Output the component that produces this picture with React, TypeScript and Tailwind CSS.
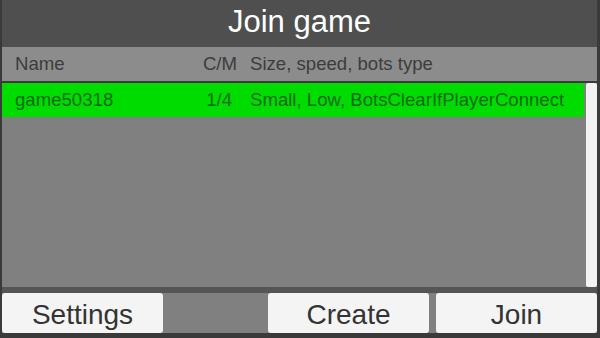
export default function App() {
  return (
    <div
      className="flex h-[338px] w-[600px] flex-col overflow-hidden bg-[#3a3a3a] pl-[2px] pr-[3px] pb-[5px]"
      style={{ fontFamily: '"Liberation Sans", Arial, sans-serif' }}
    >
      <div className="flex h-[47px] shrink-0 items-center justify-center bg-[#4f4f4f] pb-[3px] text-[31px] text-white">
        Join game
      </div>
      <div className="flex h-[34px] shrink-0 items-center bg-[#8c8c8c] text-[18.6px] text-[#3c3c3c]">
        <span className="w-[175px] pl-[13px]">Name</span>
        <span className="w-[60px] text-right">C/M</span>
        <span className="pl-[13px]">Size, speed, bots type</span>
      </div>
      <div className="mt-[2px] flex h-[204px] shrink-0 gap-[2px] bg-[#808080]">
        <div className="flex-1">
          <div className="flex h-[34px] items-center rounded-[2px] bg-[#00dc00] text-[18.6px] text-[#0f6a0f]">
            <span className="w-[175px] pl-[13px]">game50318</span>
            <span className="w-[55px] text-right">1/4</span>
            <span className="pl-[18px]">Small, Low, BotsClearIfPlayerConnect</span>
          </div>
        </div>
        <div className="w-[11px] rounded-[2px] bg-[#f2f2f2]" />
      </div>
      <div className="h-[6px] shrink-0 bg-[#555555]" />
      <div className="flex h-[40px] shrink-0 gap-[7px] bg-[#808080] text-[28px] text-[#333333]">
        <button className="flex w-[161px] items-center justify-center rounded-[3px] bg-[#f4f4f4] pt-[3px]">
          Settings
        </button>
        <div className="w-[91px]" />
        <button className="flex w-[161px] items-center justify-center rounded-[3px] bg-[#f4f4f4] pt-[3px]">
          Create
        </button>
        <button className="flex flex-1 items-center justify-center rounded-[3px] bg-[#f4f4f4] pt-[3px]">
          Join
        </button>
      </div>
    </div>
  );
}
